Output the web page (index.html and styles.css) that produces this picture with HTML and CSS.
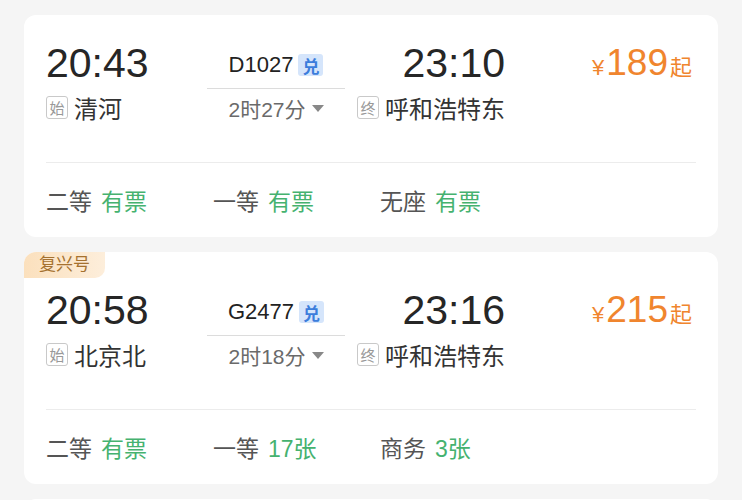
FILE: index.html
```html
<!DOCTYPE html>
<html lang="zh-CN">
<head>
  <meta charset="UTF-8" />
  <meta name="viewport" content="width=device-width, initial-scale=1.0"/>
  <title>车次列表</title>
  <link rel="stylesheet" href="styles.css">
</head>
<body>

  <div class="list">

    <div class="card">
      <div class="main">
        <div class="col depart">
          <div class="time">20:43</div>
          <div class="station"><span class="stop-tag">始</span>清河</div>
        </div>
        <div class="route">
          <div class="train"><span class="code">D1027</span><span class="dui">兑</span></div>
          <div class="track"></div>
          <div class="duration">2时27分<span class="caret"></span></div>
        </div>
        <div class="col arrive">
          <div class="time">23:10</div>
          <div class="station"><span class="stop-tag">终</span>呼和浩特东</div>
        </div>
        <div class="col fare">
          <div class="price"><span class="yen">¥</span><span class="amount">189</span><span class="qi">起</span></div>
        </div>
      </div>
      <div class="seats">
        <div class="seat"><span class="seat-name">二等</span><span class="seat-left">有票</span></div>
        <div class="seat"><span class="seat-name">一等</span><span class="seat-left">有票</span></div>
        <div class="seat"><span class="seat-name">无座</span><span class="seat-left">有票</span></div>
      </div>
    </div>

    <div class="card has-tag">
      <span class="brand">复兴号</span>
      <div class="main">
        <div class="col depart">
          <div class="time">20:58</div>
          <div class="station"><span class="stop-tag">始</span>北京北</div>
        </div>
        <div class="route">
          <div class="train"><span class="code">G2477</span><span class="dui">兑</span></div>
          <div class="track"></div>
          <div class="duration">2时18分<span class="caret"></span></div>
        </div>
        <div class="col arrive">
          <div class="time">23:16</div>
          <div class="station"><span class="stop-tag">终</span>呼和浩特东</div>
        </div>
        <div class="col fare">
          <div class="price"><span class="yen">¥</span><span class="amount">215</span><span class="qi">起</span></div>
        </div>
      </div>
      <div class="seats">
        <div class="seat"><span class="seat-name">二等</span><span class="seat-left">有票</span></div>
        <div class="seat"><span class="seat-name">一等</span><span class="seat-left">17张</span></div>
        <div class="seat"><span class="seat-name">商务</span><span class="seat-left">3张</span></div>
      </div>
    </div>

    <div class="card card-next"></div>

  </div>

</body>
</html>
```

FILE: styles.css
```css
:root {
  --bg-color: #f5f5f5;
  --text-color: #222;
  --muted: #6a6a6a;
  --green: #45b26f;
  --orange: #f0852e;
  --line: #ececec;
}

* {
  box-sizing: border-box;
  margin: 0;
  padding: 0;
}

body {
  font-family: "Liberation Sans", "Noto Sans CJK SC", sans-serif;
  background-color: var(--bg-color);
  color: var(--text-color);
  overflow: hidden;
}

.list {
  padding-top: 15px;
}

.card {
  position: relative;
  background: #fff;
  border-radius: 12px;
  margin: 0 24px 15px;
  padding: 25px 22px 0;
}

.card.has-tag {
  padding-top: 35px;
}

.card-next {
  height: 20px;
}

.brand {
  position: absolute;
  top: 0;
  left: 0;
  height: 26px;
  padding: 0 15px;
  line-height: 26px;
  font-size: 17px;
  color: #a5712f;
  background: linear-gradient(90deg, #fbe0bd, #fdeedb);
  border-radius: 12px 0 10px 0;
}

.main {
  display: grid;
  grid-template-columns: 161px 138px 160px 1fr;
}

.col {
  display: flex;
  flex-direction: column;
  gap: 6px;
}

.time {
  height: 46px;
  line-height: 46px;
  font-size: 41px;
  color: #262626;
}

.station {
  height: 30px;
  display: flex;
  align-items: center;
  font-size: 24px;
  color: #333;
}

.arrive {
  align-items: flex-end;
}

.stop-tag {
  width: 22px;
  height: 23px;
  display: inline-flex;
  align-items: center;
  justify-content: center;
  border: 1px solid #c9c9c9;
  border-radius: 3px;
  font-size: 15px;
  color: #999;
  margin-right: 6px;
}

.route {
  display: flex;
  flex-direction: column;
}

.train {
  height: 46px;
  padding-top: 4px;
  display: flex;
  align-items: center;
  justify-content: center;
}

.code {
  font-size: 22px;
  color: #222;
}

.dui {
  width: 25px;
  height: 22px;
  margin-left: 5px;
  display: inline-flex;
  align-items: center;
  justify-content: center;
  font-size: 17px;
  font-weight: 700;
  color: #3c7ddc;
  background: #d5e5fb;
  border-radius: 3px;
}

.track {
  height: 1px;
  margin-top: 2px;
  background: #dcdcdc;
}

.duration {
  height: 30px;
  margin-top: 4px;
  display: flex;
  align-items: center;
  justify-content: center;
  font-size: 21px;
  color: var(--muted);
}

.caret {
  width: 0;
  height: 0;
  margin-left: 6px;
  border-left: 6px solid transparent;
  border-right: 6px solid transparent;
  border-top: 7px solid #888;
}

.fare {
  align-items: flex-end;
  padding-right: 4px;
}

.price {
  height: 46px;
  display: flex;
  align-items: baseline;
  line-height: 46px;
  color: var(--orange);
}

.yen {
  font-size: 22px;
  margin-right: 2px;
}

.amount {
  font-size: 37px;
}

.qi {
  font-size: 22px;
  margin-left: 2px;
}

.seats {
  margin-top: 39px;
  border-top: 1px solid var(--line);
  height: 75px;
  display: grid;
  grid-template-columns: repeat(3, 167px);
  align-items: center;
}

.seat {
  font-size: 23px;
}

.seat-name {
  color: #555;
  margin-right: 9px;
}

.seat-left {
  color: var(--green);
}
```
